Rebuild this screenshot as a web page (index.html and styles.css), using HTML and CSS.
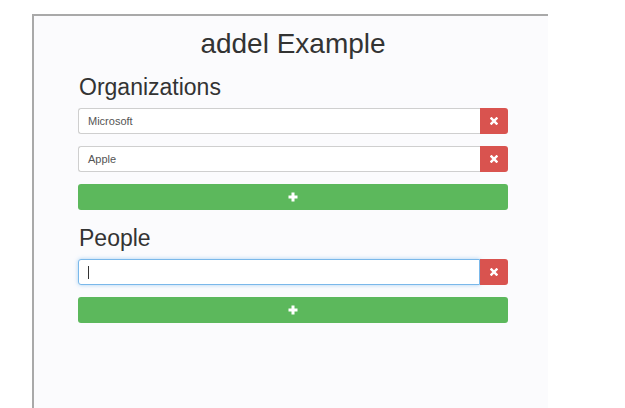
FILE: index.html
```html
<!DOCTYPE html>
<html>
<head>
<meta charset="utf-8">
<link rel="stylesheet" href="styles.css">
</head>
<body>
<div class="frame">
  <h1 class="title">addel Example</h1>
  <section class="group">
    <h2 class="heading">Organizations</h2>
    <div class="row">
      <div class="input">Microsoft</div>
      <button class="del"><svg width="8" height="8" viewBox="0 0 10 10"><path d="M1.8 1.8 L8.2 8.2 M8.2 1.8 L1.8 8.2" stroke="#fff" stroke-width="3" stroke-linecap="square"/></svg></button>
    </div>
    <div class="row">
      <div class="input">Apple</div>
      <button class="del"><svg width="8" height="8" viewBox="0 0 10 10"><path d="M1.8 1.8 L8.2 8.2 M8.2 1.8 L1.8 8.2" stroke="#fff" stroke-width="3" stroke-linecap="square"/></svg></button>
    </div>
    <button class="add"><svg width="10" height="10" viewBox="0 0 10 10"><path d="M5 0.5 V9.5 M0.5 5 H9.5" stroke="#fff" stroke-width="3"/></svg></button>
  </section>
  <section class="group">
    <h2 class="heading">People</h2>
    <div class="row">
      <div class="input focus"><span class="caret"></span></div>
      <button class="del"><svg width="8" height="8" viewBox="0 0 10 10"><path d="M1.8 1.8 L8.2 8.2 M8.2 1.8 L1.8 8.2" stroke="#fff" stroke-width="3" stroke-linecap="square"/></svg></button>
    </div>
    <button class="add"><svg width="10" height="10" viewBox="0 0 10 10"><path d="M5 0.5 V9.5 M0.5 5 H9.5" stroke="#fff" stroke-width="3"/></svg></button>
  </section>
</div>
</body>
</html>
```

FILE: styles.css
```css
html, body {
  margin: 0;
  padding: 0;
  background: #ffffff;
  height: 100%;
  overflow: hidden;
}
body {
  font-family: "Liberation Sans", Arial, sans-serif;
  color: #333;
}
.frame {
  margin: 14px 0 0 32px;
  width: 516px;
  height: 400px;
  border-top: 2px solid #a9a9a9;
  border-left: 2px solid #a9a9a9;
  background: #fbfbfd;
  padding: 0 40px 0 44px;
  box-sizing: border-box;
}
.title {
  margin: 0;
  padding-top: 12px;
  font-size: 28px;
  font-weight: normal;
  line-height: 32px;
  text-align: center;
  color: #333;
}
.group {
  display: flex;
  flex-direction: column;
  gap: 12px;
}
.heading {
  margin: 13px 0 -5px 1px;
  font-size: 23px;
  font-weight: normal;
  line-height: 28px;
  color: #333;
}
.group + .group .heading {
  margin-top: 14px;
}
.row {
  display: flex;
  height: 26px;
}
.input {
  flex: 1;
  box-sizing: border-box;
  border: 1px solid #cfcfcf;
  border-right: none;
  border-radius: 3px 0 0 3px;
  background: #fff;
  font-size: 11px;
  line-height: 24px;
  padding-left: 9px;
  color: #555;
}
.input.focus {
  border: 1px solid #7ab8ea;
  box-shadow: 0 0 4px rgba(102, 175, 233, 0.55);
  display: flex;
  align-items: center;
}
.caret {
  display: block;
  width: 1px;
  height: 13px;
  background: #333;
}
.del {
  width: 28px;
  height: 26px;
  border: none;
  padding: 0;
  margin: 0;
  background: #d9534f;
  border-radius: 0 3px 3px 0;
  display: flex;
  align-items: center;
  justify-content: center;
}
.add {
  height: 26px;
  border: none;
  padding: 0;
  margin: 0;
  background: #5cb85c;
  border-radius: 3px;
  display: flex;
  align-items: center;
  justify-content: center;
}
```
